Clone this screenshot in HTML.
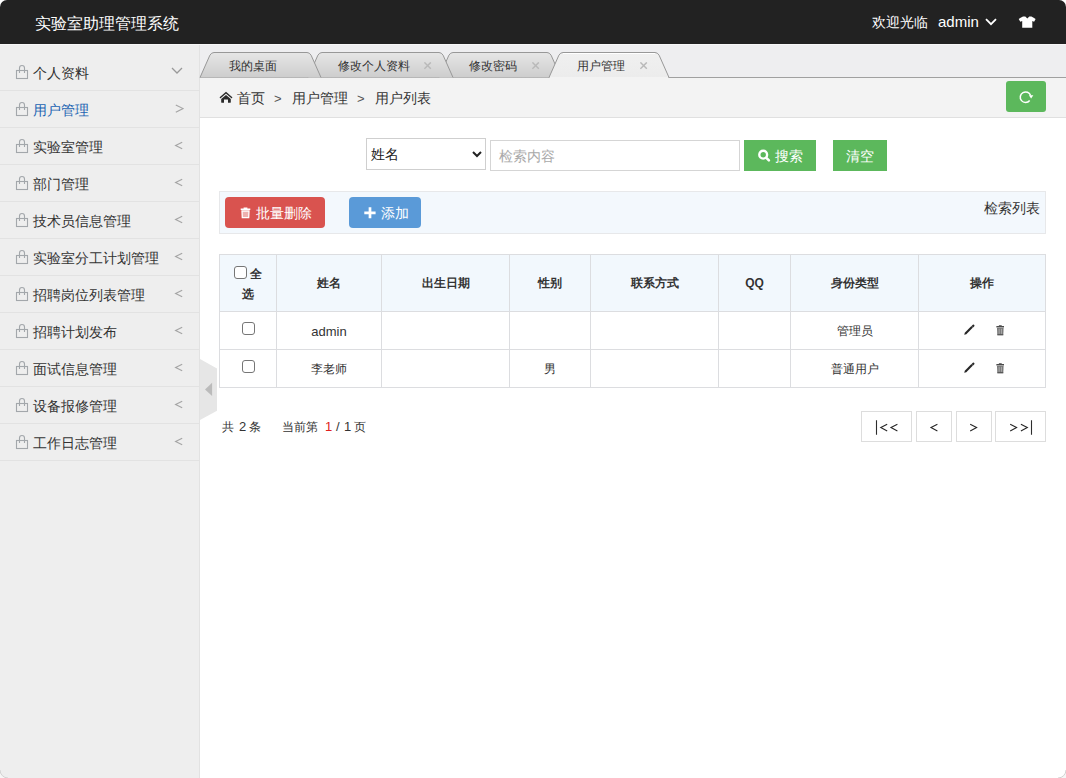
<!DOCTYPE html>
<html><head><meta charset="utf-8">
<style>
*{box-sizing:border-box;margin:0;padding:0}
html,body{width:1066px;height:778px;overflow:hidden;background:#fff}
body{font-family:"Liberation Sans",sans-serif;font-size:14px;color:#333;position:relative}
.abs{position:absolute}
#hdr{left:0;top:0;width:1066px;height:44px;background:#222;border-radius:7px 7px 0 0}
#hdrline{left:0;top:44px;width:1066px;height:1px;background:#f7f7f7}
#title{left:35px;top:12.5px;color:#fff;font-size:16px;font-weight:500;line-height:22px;white-space:nowrap}
#welcome{left:872px;top:11px;color:#fff;font-size:14px;font-weight:500;line-height:22px;white-space:nowrap}
#admin{left:938px;top:11px;color:#fff;font-size:15px;line-height:22px;white-space:nowrap}
#side{left:0;top:45px;width:199px;height:733px;background:#eeeeee}
#sideb{left:199px;top:45px;width:1px;height:733px;background:#e2e2e2}
.item{position:absolute;left:0;width:199px;height:37px;border-bottom:1px solid #e2e2e2}
.item .t{position:absolute;left:33px;top:7.5px;line-height:22px;font-size:14px;font-weight:500;color:#333;white-space:nowrap}
.item.act .t{color:#1b64b2}
.item .ar{position:absolute;left:175px;top:8px;line-height:20px;font-size:13px;color:#999}
.item .bag{position:absolute;left:15px;top:10px}
#tabbg{left:200px;top:45px;width:866px;height:33px;background:#eeeef0}
.tlab{top:57px;font-size:12px;font-weight:500;line-height:18px;color:#333;white-space:nowrap}
#crumb{left:200px;top:78px;width:866px;height:40px;background:#f3f3f3;border-bottom:1px solid #e0e0e0}
#main{left:200px;top:118px;width:866px;height:660px;background:#fff}
.bc{top:88px;font-size:14px;font-weight:500;line-height:20px;color:#333;white-space:nowrap}
.gt{top:89px;font-size:13px;line-height:20px;color:#555}
.btn-g{background:#5cb85c;color:#fff}
.th{font-size:12px;font-weight:bold;line-height:56px;text-align:center;color:#333}
.td{font-size:12px;line-height:37px;text-align:center;color:#333}
.cb{width:13px;height:13px;border:1px solid #767676;border-radius:3px;background:#fff}
.pgt{top:416.5px;font-size:12px;line-height:20px;color:#333;white-space:nowrap}
.pgd{top:416.5px;font-size:13px;line-height:20px;color:#333}
.pg{top:411px;height:31px;border:1px solid #dddddd;background:#fff;font-size:14px;line-height:29px;text-align:center;color:#333}
</style></head><body>
<div class="abs" id="hdr"></div>
<div class="abs" id="hdrline"></div>
<div class="abs" id="title">实验室助理管理系统</div>
<div class="abs" id="welcome">欢迎光临</div>
<div class="abs" id="admin">admin</div>
<svg class="abs" style="left:985px;top:18px" width="12" height="8" viewBox="0 0 12 8"><path d="M1 1.2 L6 6.2 L11 1.2" fill="none" stroke="#fff" stroke-width="1.8"/></svg>
<svg class="abs" style="left:1018px;top:16px" width="18" height="13" viewBox="0 0 18 13"><path d="M5 0.6 L7.3 0.6 L9.3 2.6 L11.3 0.6 L13.4 0.6 Q15.8 1.6 17.6 3.1 L16.1 5.8 L14.3 5.1 L14.3 11.8 L4.2 11.8 L4.2 5.1 L2.3 5.8 L0.7 3.1 Q2.4 1.6 5 0.6 Z" fill="#fff"/></svg>

<div class="abs" id="side"></div>
<div class="abs" id="sideb"></div>
<div class="item" style="top:54px"><svg class="bag" width="14" height="16" viewBox="0 0 14 16"><rect x="1.5" y="6.5" width="11" height="8" fill="none" stroke="#a3a7ab" stroke-width="1.1"/><path d="M4.5 9 V4 A2.5 2.5 0 0 1 9.5 4 V9" fill="none" stroke="#a3a7ab" stroke-width="1.1"/></svg><span class="t">个人资料</span><svg class="chev" width="12" height="8" viewBox="0 0 12 8" style="position:absolute;left:171px;top:13px"><path d="M1 1 L6 6 L11 1" fill="none" stroke="#999" stroke-width="1.3"/></svg></div>
<div class="item act" style="top:91px"><svg class="bag" width="14" height="16" viewBox="0 0 14 16"><rect x="1.5" y="6.5" width="11" height="8" fill="none" stroke="#a3a7ab" stroke-width="1.1"/><path d="M4.5 9 V4 A2.5 2.5 0 0 1 9.5 4 V9" fill="none" stroke="#a3a7ab" stroke-width="1.1"/></svg><span class="t">用户管理</span><svg width="10" height="10" viewBox="0 0 10 10" style="position:absolute;left:174px;top:13px"><path d="M1.8 0.9 L9.1 4.6 L1.8 8.3" fill="none" stroke="#a5a5a5" stroke-width="1.15"/></svg></div>
<div class="item" style="top:128px"><svg class="bag" width="14" height="16" viewBox="0 0 14 16"><rect x="1.5" y="6.5" width="11" height="8" fill="none" stroke="#a3a7ab" stroke-width="1.1"/><path d="M4.5 9 V4 A2.5 2.5 0 0 1 9.5 4 V9" fill="none" stroke="#a3a7ab" stroke-width="1.1"/></svg><span class="t">实验室管理</span><svg width="10" height="10" viewBox="0 0 10 10" style="position:absolute;left:174px;top:13px"><path d="M8.2 1.2 L1.6 4.5 L8.2 7.8" fill="none" stroke="#a5a5a5" stroke-width="1.15"/></svg></div>
<div class="item" style="top:165px"><svg class="bag" width="14" height="16" viewBox="0 0 14 16"><rect x="1.5" y="6.5" width="11" height="8" fill="none" stroke="#a3a7ab" stroke-width="1.1"/><path d="M4.5 9 V4 A2.5 2.5 0 0 1 9.5 4 V9" fill="none" stroke="#a3a7ab" stroke-width="1.1"/></svg><span class="t">部门管理</span><svg width="10" height="10" viewBox="0 0 10 10" style="position:absolute;left:174px;top:13px"><path d="M8.2 1.2 L1.6 4.5 L8.2 7.8" fill="none" stroke="#a5a5a5" stroke-width="1.15"/></svg></div>
<div class="item" style="top:202px"><svg class="bag" width="14" height="16" viewBox="0 0 14 16"><rect x="1.5" y="6.5" width="11" height="8" fill="none" stroke="#a3a7ab" stroke-width="1.1"/><path d="M4.5 9 V4 A2.5 2.5 0 0 1 9.5 4 V9" fill="none" stroke="#a3a7ab" stroke-width="1.1"/></svg><span class="t">技术员信息管理</span><svg width="10" height="10" viewBox="0 0 10 10" style="position:absolute;left:174px;top:13px"><path d="M8.2 1.2 L1.6 4.5 L8.2 7.8" fill="none" stroke="#a5a5a5" stroke-width="1.15"/></svg></div>
<div class="item" style="top:239px"><svg class="bag" width="14" height="16" viewBox="0 0 14 16"><rect x="1.5" y="6.5" width="11" height="8" fill="none" stroke="#a3a7ab" stroke-width="1.1"/><path d="M4.5 9 V4 A2.5 2.5 0 0 1 9.5 4 V9" fill="none" stroke="#a3a7ab" stroke-width="1.1"/></svg><span class="t">实验室分工计划管理</span><svg width="10" height="10" viewBox="0 0 10 10" style="position:absolute;left:174px;top:13px"><path d="M8.2 1.2 L1.6 4.5 L8.2 7.8" fill="none" stroke="#a5a5a5" stroke-width="1.15"/></svg></div>
<div class="item" style="top:276px"><svg class="bag" width="14" height="16" viewBox="0 0 14 16"><rect x="1.5" y="6.5" width="11" height="8" fill="none" stroke="#a3a7ab" stroke-width="1.1"/><path d="M4.5 9 V4 A2.5 2.5 0 0 1 9.5 4 V9" fill="none" stroke="#a3a7ab" stroke-width="1.1"/></svg><span class="t">招聘岗位列表管理</span><svg width="10" height="10" viewBox="0 0 10 10" style="position:absolute;left:174px;top:13px"><path d="M8.2 1.2 L1.6 4.5 L8.2 7.8" fill="none" stroke="#a5a5a5" stroke-width="1.15"/></svg></div>
<div class="item" style="top:313px"><svg class="bag" width="14" height="16" viewBox="0 0 14 16"><rect x="1.5" y="6.5" width="11" height="8" fill="none" stroke="#a3a7ab" stroke-width="1.1"/><path d="M4.5 9 V4 A2.5 2.5 0 0 1 9.5 4 V9" fill="none" stroke="#a3a7ab" stroke-width="1.1"/></svg><span class="t">招聘计划发布</span><svg width="10" height="10" viewBox="0 0 10 10" style="position:absolute;left:174px;top:13px"><path d="M8.2 1.2 L1.6 4.5 L8.2 7.8" fill="none" stroke="#a5a5a5" stroke-width="1.15"/></svg></div>
<div class="item" style="top:350px"><svg class="bag" width="14" height="16" viewBox="0 0 14 16"><rect x="1.5" y="6.5" width="11" height="8" fill="none" stroke="#a3a7ab" stroke-width="1.1"/><path d="M4.5 9 V4 A2.5 2.5 0 0 1 9.5 4 V9" fill="none" stroke="#a3a7ab" stroke-width="1.1"/></svg><span class="t">面试信息管理</span><svg width="10" height="10" viewBox="0 0 10 10" style="position:absolute;left:174px;top:13px"><path d="M8.2 1.2 L1.6 4.5 L8.2 7.8" fill="none" stroke="#a5a5a5" stroke-width="1.15"/></svg></div>
<div class="item" style="top:387px"><svg class="bag" width="14" height="16" viewBox="0 0 14 16"><rect x="1.5" y="6.5" width="11" height="8" fill="none" stroke="#a3a7ab" stroke-width="1.1"/><path d="M4.5 9 V4 A2.5 2.5 0 0 1 9.5 4 V9" fill="none" stroke="#a3a7ab" stroke-width="1.1"/></svg><span class="t">设备报修管理</span><svg width="10" height="10" viewBox="0 0 10 10" style="position:absolute;left:174px;top:13px"><path d="M8.2 1.2 L1.6 4.5 L8.2 7.8" fill="none" stroke="#a5a5a5" stroke-width="1.15"/></svg></div>
<div class="item" style="top:424px"><svg class="bag" width="14" height="16" viewBox="0 0 14 16"><rect x="1.5" y="6.5" width="11" height="8" fill="none" stroke="#a3a7ab" stroke-width="1.1"/><path d="M4.5 9 V4 A2.5 2.5 0 0 1 9.5 4 V9" fill="none" stroke="#a3a7ab" stroke-width="1.1"/></svg><span class="t">工作日志管理</span><svg width="10" height="10" viewBox="0 0 10 10" style="position:absolute;left:174px;top:13px"><path d="M8.2 1.2 L1.6 4.5 L8.2 7.8" fill="none" stroke="#a5a5a5" stroke-width="1.15"/></svg></div>

<div class="abs" id="tabbg"></div>
<div class="abs" id="crumb"></div>
<svg class="abs" style="left:0;top:0" width="1066" height="80" viewBox="0 0 1066 80">
<defs><linearGradient id="g" x1="0" y1="0" x2="0" y2="1"><stop offset="0" stop-color="#e6e6e6"/><stop offset="1" stop-color="#cdcdcd"/></linearGradient><linearGradient id="ga" x1="0" y1="0" x2="0" y2="1"><stop offset="0" stop-color="#f0f0f0"/><stop offset="1" stop-color="#ececec"/></linearGradient></defs>
<line x1="200" y1="77.5" x2="1066" y2="77.5" stroke="#a0a0a0" stroke-width="1"/>
<path d="M439,77.5 L448.9,55.2 Q450.5,52.5 453.0,52.5 L547.0,52.5 Q549.5,52.5 551.1,55.2 L561,77.5 Z" fill="url(#g)" stroke="none"/>
<path d="M439,77.5 L448.9,55.2 Q450.5,52.5 453.0,52.5 L547.0,52.5 Q549.5,52.5 551.1,55.2 L561,77.5" fill="none" stroke="#989898" stroke-width="1"/>
<path d="M308,77.5 L317.9,55.2 Q319.5,52.5 322.0,52.5 L439.0,52.5 Q441.5,52.5 443.1,55.2 L453,77.5 Z" fill="url(#g)" stroke="none"/>
<path d="M308,77.5 L317.9,55.2 Q319.5,52.5 322.0,52.5 L439.0,52.5 Q441.5,52.5 443.1,55.2 L453,77.5" fill="none" stroke="#989898" stroke-width="1"/>
<path d="M200,77.5 L209.9,55.2 Q211.5,52.5 214.0,52.5 L307.0,52.5 Q309.5,52.5 311.1,55.2 L321,77.5 Z" fill="url(#g)" stroke="none"/>
<path d="M200,77.5 L209.9,55.2 Q211.5,52.5 214.0,52.5 L307.0,52.5 Q309.5,52.5 311.1,55.2 L321,77.5" fill="none" stroke="#989898" stroke-width="1"/>
<path d="M549,77.5 L558.9,55.2 Q560.5,52.5 563.0,52.5 L655.0,52.5 Q657.5,52.5 659.1,55.2 L669,77.5 Z" fill="url(#ga)" stroke="none"/>
<rect x="550" y="77" width="118" height="2" fill="#f3f3f3"/>
<path d="M549,77.5 L558.9,55.2 Q560.5,52.5 563.0,52.5 L655.0,52.5 Q657.5,52.5 659.1,55.2 L669,77.5" fill="none" stroke="#989898" stroke-width="1"/>
<line x1="563" y1="53.5" x2="655" y2="53.5" stroke="#fff" stroke-width="1"/>
</svg>
<div class="abs tlab" style="left:229px">我的桌面</div>
<div class="abs tlab" style="left:338px">修改个人资料</div>
<svg class="abs" style="left:424px;top:62px" width="8" height="8" viewBox="0 0 8 8"><path d="M0.4 0.4 L6.8 6.8 M6.8 0.4 L0.4 6.8" stroke="#b9b9b9" stroke-width="1.45"/></svg>
<div class="abs tlab" style="left:469px">修改密码</div>
<svg class="abs" style="left:532px;top:62px" width="8" height="8" viewBox="0 0 8 8"><path d="M0.4 0.4 L6.8 6.8 M6.8 0.4 L0.4 6.8" stroke="#b9b9b9" stroke-width="1.45"/></svg>
<div class="abs tlab" style="left:577px">用户管理</div>
<svg class="abs" style="left:640px;top:62px" width="8" height="8" viewBox="0 0 8 8"><path d="M0.4 0.4 L6.8 6.8 M6.8 0.4 L0.4 6.8" stroke="#b9b9b9" stroke-width="1.45"/></svg>
<div class="abs" id="main"></div>

<!-- breadcrumb -->
<svg class="abs" style="left:219px;top:91px" width="14" height="13" viewBox="0 0 14 13"><path d="M1.4 6.5 L7 1.6 L12.6 6.5" stroke="#2a2a2a" stroke-width="1.4" fill="none" stroke-linecap="round"/><path d="M7 4.1 L11.8 8.1 V11.3 Q11.8 11.7 11.4 11.7 H9 V8.6 H5 V11.7 H2.6 Q2.2 11.7 2.2 11.3 V8.1 Z" fill="#2a2a2a"/></svg>
<div class="abs bc" style="left:237px">首页</div>
<div class="abs gt" style="left:274px">&gt;</div>
<div class="abs bc" style="left:292px">用户管理</div>
<div class="abs gt" style="left:357px">&gt;</div>
<div class="abs bc" style="left:375px">用户列表</div>
<div class="abs btn-g" style="left:1006px;top:81px;width:40px;height:31px;border-radius:3px"></div>
<svg class="abs" style="left:1018px;top:89px" width="16" height="16" viewBox="0 0 16 16"><path d="M11.7 11.5 A5.3 5.3 0 1 1 12.6 6.6" fill="none" stroke="#fff" stroke-width="1.5"/><path d="M10.9 6.2 L15.3 6.2 L13.1 9.4 Z" fill="#fff"/></svg>

<!-- search -->
<div class="abs" style="left:366px;top:138px;width:120px;height:32px;border:1px solid #cfcfcf;background:#fff"></div>
<div class="abs" style="left:371px;top:144px;font-size:14px;font-weight:500;line-height:20px;color:#222">姓名</div>
<svg class="abs" style="left:472px;top:151px" width="10" height="7" viewBox="0 0 10 7"><path d="M1 1 L5 5 L9 1" fill="none" stroke="#222" stroke-width="2"/></svg>
<div class="abs" style="left:490px;top:140px;width:250px;height:31px;border:1px solid #d5d5d5;background:#fff"></div>
<div class="abs" style="left:499px;top:145.5px;font-size:14px;line-height:20px;color:#a9a9a9">检索内容</div>
<div class="abs btn-g" style="left:744px;top:140px;width:72px;height:31px"></div>
<svg class="abs" style="left:757px;top:149px" width="14" height="14" viewBox="0 0 14 14"><circle cx="6.2" cy="5.7" r="3.9" fill="none" stroke="#fff" stroke-width="2.4"/><path d="M9.3 8.8 L11.9 11.4" stroke="#fff" stroke-width="2.6" stroke-linecap="round"/></svg>
<div class="abs" style="left:775px;top:146px;font-size:14px;font-weight:500;line-height:20px;color:#fff">搜索</div>
<div class="abs btn-g" style="left:833px;top:140px;width:54px;height:31px"></div>
<div class="abs" style="left:846px;top:146px;font-size:14px;font-weight:500;line-height:20px;color:#fff">清空</div>

<!-- toolbar -->
<div class="abs" style="left:219px;top:191px;width:827px;height:43px;background:#f3f8fd;border:1px solid #e7e8ea"></div>
<div class="abs" style="left:225px;top:197px;width:100px;height:31px;background:#d9534f;border-radius:4px"></div>
<svg class="abs" style="left:239.5px;top:206.5px" width="11" height="12" viewBox="0 0 11 12"><path d="M3.6 0.5 H7.4 V1.5 H10.3 V3 H0.7 V1.5 H3.6 Z" fill="#fff"/><path d="M2 4 H9 L8.7 10.7 H2.3 Z" fill="rgba(255,255,255,0.55)" stroke="#fff" stroke-width="1.3"/></svg>
<div class="abs" style="left:256px;top:203px;font-size:14px;font-weight:500;line-height:20px;color:#fff">批量删除</div>
<div class="abs" style="left:349px;top:197px;width:72px;height:31px;background:#5a9ad8;border-radius:4px"></div>
<svg class="abs" style="left:363.5px;top:206.8px" width="12" height="12" viewBox="0 0 12 12"><path d="M6 0.3 V11.3 M0.3 5.8 H11.6" stroke="#fff" stroke-width="2.7"/></svg>
<div class="abs" style="left:380.5px;top:203px;font-size:14px;font-weight:500;line-height:20px;color:#fff">添加</div>
<div class="abs" style="left:984px;top:198px;font-size:14px;font-weight:500;line-height:20px;color:#333">检索列表</div>

<!-- table -->
<div class="abs" style="left:219px;top:254px;width:827px;height:57px;background:#f2f8fd"></div>
<div class="abs" style="left:219px;top:254px;width:827px;height:1px;background:#dcdde0"></div>
<div class="abs" style="left:219px;top:311px;width:827px;height:1px;background:#dcdde0"></div>
<div class="abs" style="left:219px;top:349px;width:827px;height:1px;background:#dcdde0"></div>
<div class="abs" style="left:219px;top:387px;width:827px;height:1px;background:#dcdde0"></div>
<div class="abs" style="left:219px;top:254px;width:1px;height:134px;background:#dcdde0"></div>
<div class="abs" style="left:276px;top:254px;width:1px;height:134px;background:#dcdde0"></div>
<div class="abs" style="left:381px;top:254px;width:1px;height:134px;background:#dcdde0"></div>
<div class="abs" style="left:509px;top:254px;width:1px;height:134px;background:#dcdde0"></div>
<div class="abs" style="left:590px;top:254px;width:1px;height:134px;background:#dcdde0"></div>
<div class="abs" style="left:718px;top:254px;width:1px;height:134px;background:#dcdde0"></div>
<div class="abs" style="left:790px;top:254px;width:1px;height:134px;background:#dcdde0"></div>
<div class="abs" style="left:918px;top:254px;width:1px;height:134px;background:#dcdde0"></div>
<div class="abs" style="left:1045px;top:254px;width:1px;height:134px;background:#dcdde0"></div>
<div class="abs th" style="left:277px;top:255px;width:104px">姓名</div>
<div class="abs th" style="left:382px;top:255px;width:127px">出生日期</div>
<div class="abs th" style="left:510px;top:255px;width:80px">性别</div>
<div class="abs th" style="left:591px;top:255px;width:127px">联系方式</div>
<div class="abs th" style="left:719px;top:255px;width:71px">QQ</div>
<div class="abs th" style="left:791px;top:255px;width:127px">身份类型</div>
<div class="abs th" style="left:919px;top:255px;width:126px">操作</div>
<div class="abs td" style="left:277px;top:313px;width:104px"><span style="font-size:13px">admin</span></div>
<div class="abs td" style="left:791px;top:313px;width:127px">管理员</div>
<div class="abs td" style="left:277px;top:351px;width:104px">李老师</div>
<div class="abs td" style="left:510px;top:351px;width:80px">男</div>
<div class="abs td" style="left:791px;top:351px;width:127px">普通用户</div>
<div class="abs cb" style="left:234px;top:266px"></div>
<div class="abs" style="left:250px;top:264px;font-size:12px;font-weight:bold;line-height:20px">全</div>
<div class="abs" style="left:242px;top:284px;font-size:12px;font-weight:bold;line-height:20px">选</div>
<div class="abs cb" style="left:242px;top:322px"></div>
<div class="abs cb" style="left:242px;top:360px"></div>





<svg class="abs" style="left:963px;top:324px" width="12" height="12" viewBox="0 0 12 12"><path d="M1.2 10.8 L1.8 8.7 L8.4 2.1 L9.9 3.6 L3.3 10.2 Z" fill="#262626"/><path d="M8.6 1.9 L9.8 0.7 Q10.4 0.2 11 0.8 L11.2 1 Q11.8 1.6 11.3 2.2 L10.1 3.4 Z" fill="#262626"/></svg>
<svg class="abs" style="left:995.6px;top:325px" width="8.6" height="11" viewBox="0 0 9 11" preserveAspectRatio="none"><path d="M3 0.2 H6 V1 H8.6 V2.6 H0.4 V1 H3 Z" fill="#4a4a4a"/><path d="M1 3 H8 L7.6 10.2 H1.4 Z" fill="#7a7a7a"/><path d="M1.4 9.4 H7.6 V10.2 H1.4 Z" fill="#444"/><path d="M3.3 3.8 V8.8 M5.7 3.8 V8.8" stroke="#b9b9b9" stroke-width="0.8"/></svg>
<svg class="abs" style="left:963px;top:362px" width="12" height="12" viewBox="0 0 12 12"><path d="M1.2 10.8 L1.8 8.7 L8.4 2.1 L9.9 3.6 L3.3 10.2 Z" fill="#262626"/><path d="M8.6 1.9 L9.8 0.7 Q10.4 0.2 11 0.8 L11.2 1 Q11.8 1.6 11.3 2.2 L10.1 3.4 Z" fill="#262626"/></svg>
<svg class="abs" style="left:995.6px;top:363px" width="8.6" height="11" viewBox="0 0 9 11" preserveAspectRatio="none"><path d="M3 0.2 H6 V1 H8.6 V2.6 H0.4 V1 H3 Z" fill="#4a4a4a"/><path d="M1 3 H8 L7.6 10.2 H1.4 Z" fill="#7a7a7a"/><path d="M1.4 9.4 H7.6 V10.2 H1.4 Z" fill="#444"/><path d="M3.3 3.8 V8.8 M5.7 3.8 V8.8" stroke="#b9b9b9" stroke-width="0.8"/></svg>
<!-- sidebar handle -->
<svg class="abs" style="left:200px;top:358px" width="18" height="63" viewBox="0 0 18 63"><path d="M0 1 L17 10.5 L17 52.7 L0 62 Z" fill="#e6e6e6"/><path d="M5 31.4 L12.1 24.7 L12.1 38 Z" fill="#bbb"/></svg>

<!-- pagination -->
<div class="abs pgt" style="left:222px">共</div>
<div class="abs pgd" style="left:239px">2</div>
<div class="abs pgt" style="left:249px">条</div>
<div class="abs pgt" style="left:282px">当前第</div>
<div class="abs pgd" style="left:325px;color:#e02020">1</div>
<div class="abs pgd" style="left:336px">/</div>
<div class="abs pgd" style="left:344px">1</div>
<div class="abs pgt" style="left:354px">页</div>
<div class="abs pg" style="left:861px;width:51px"></div>
<div class="abs pg" style="left:916px;width:36px"></div>
<div class="abs pg" style="left:956px;width:36px"></div>
<div class="abs pg" style="left:995px;width:51px"></div>
<svg class="abs" style="left:0;top:0" width="1066" height="778" viewBox="0 0 1066 778"><path d="M887.2,424.3 L880.8000000000001,427.6 L887.2,430.9 M897.4,424.3 L891.0,427.6 L897.4,430.9 M937.4,424.3 L931.0,427.6 L937.4,430.9 M970.2,424.3 L976.6,427.6 L970.2,430.9 M1010.2,424.3 L1016.6,427.6 L1010.2,430.9 M1020.9,424.3 L1027.3,427.6 L1020.9,430.9" fill="none" stroke="#262626" stroke-width="1.1"/><path d="M876.5,420.2 V434.8 M1031.5,420.2 V434.8" stroke="#2d2d2d" stroke-width="1.1"/></svg>
<svg class="abs" style="left:0;top:766px" width="12" height="12" viewBox="0 0 12 12"><path d="M0 4 A8 8 0 0 0 8 12 L0 12 Z" fill="#f6f6f6"/><path d="M0 4 A8 8 0 0 0 8 12" fill="none" stroke="#d2d2d2" stroke-width="1"/></svg>
<svg class="abs" style="left:1054px;top:766px" width="12" height="12" viewBox="0 0 12 12"><path d="M12 4 A8 8 0 0 1 4 12 L12 12 Z" fill="#f6f6f6"/><path d="M12 4 A8 8 0 0 1 4 12" fill="none" stroke="#d2d2d2" stroke-width="1"/></svg>
</body></html>
